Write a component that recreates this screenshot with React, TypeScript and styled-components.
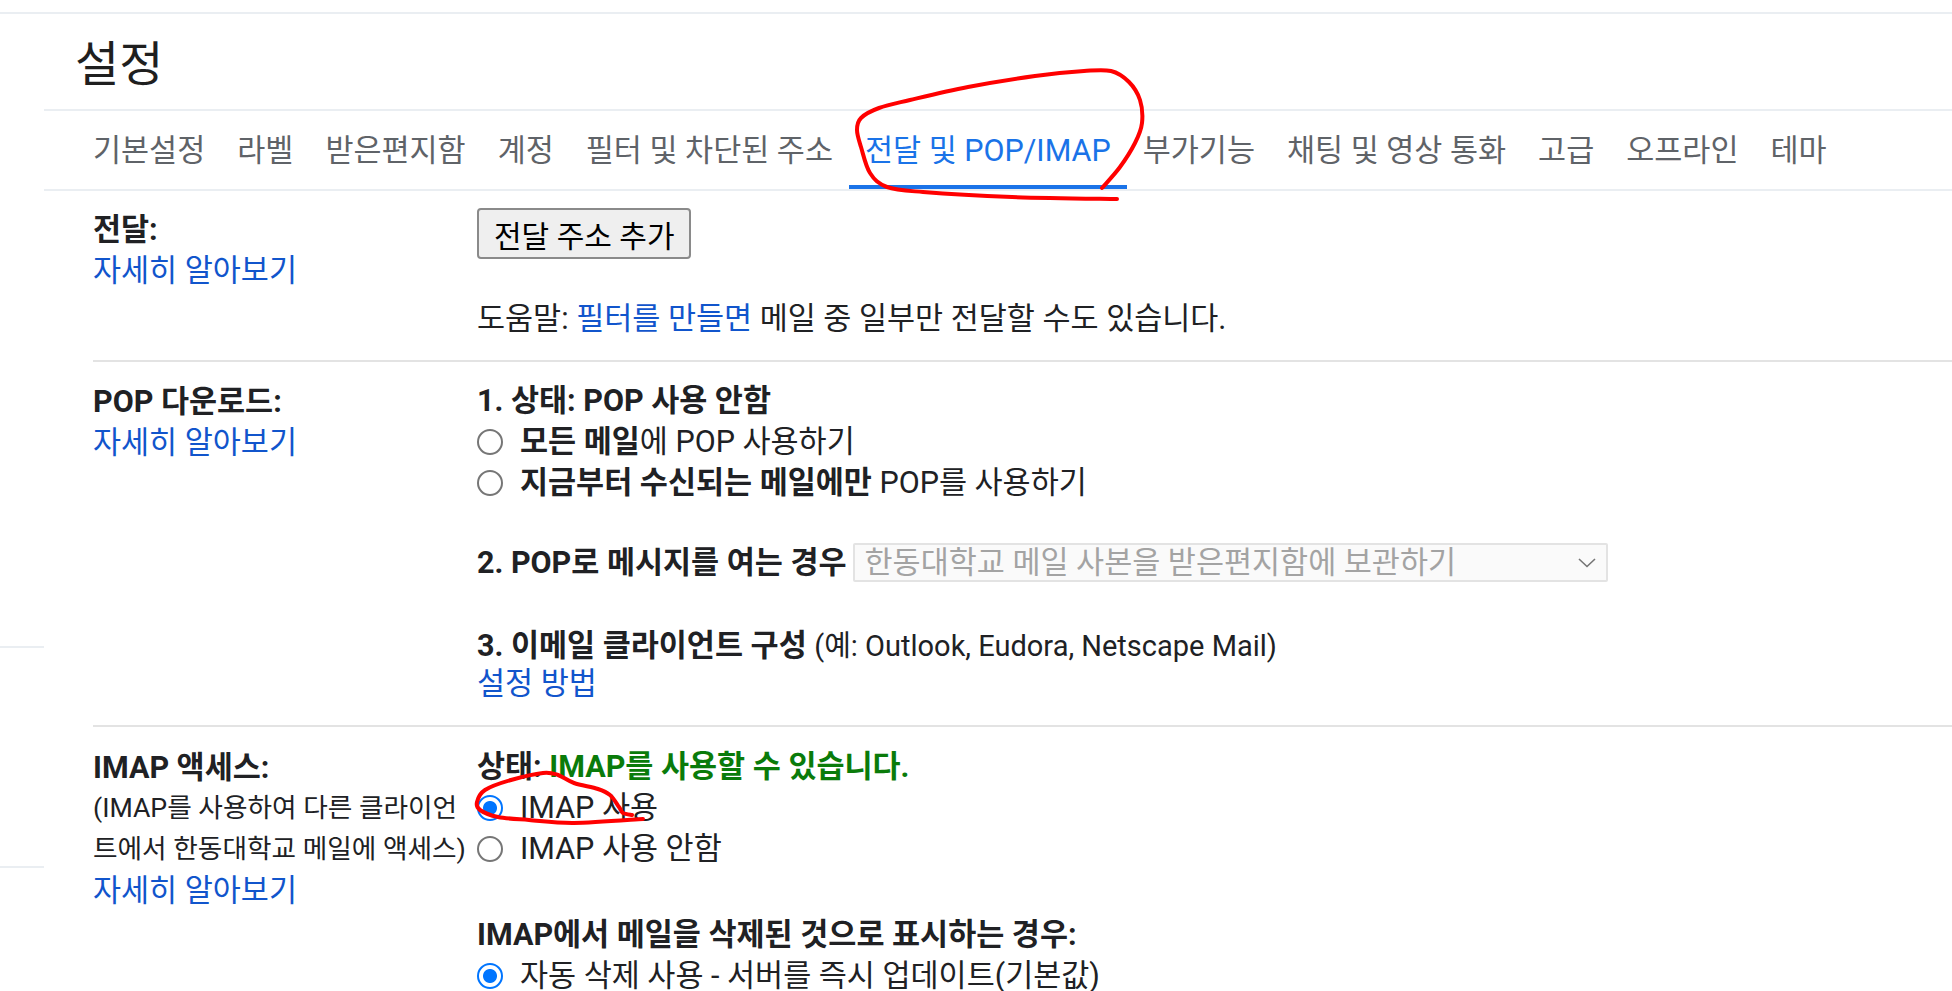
import React from "react";
import styled, { createGlobalStyle } from "styled-components";

const GlobalStyle = createGlobalStyle`
  html, body { margin: 0; padding: 0; background: #ffffff; }
  body {
    font-family: Roboto, "Noto Sans CJK KR", "Noto Sans", sans-serif;
    color: #202124;
    overflow: hidden;
  }
  * { box-sizing: border-box; }
`;

const Page = styled.div`
  position: relative;
  width: 1952px;
  height: 991px;
  overflow: hidden;
  padding-top: 12px;
`;

const TopRule = styled.div`
  height: 2px;
  background: #eaeef2;
`;

const Body = styled.div`
  display: flex;
`;

const Gutter = styled.div`
  width: 44px;
  flex: none;
  display: flex;
  flex-direction: column;
`;

const GutterRule = styled.div<{ $gap: number }>`
  margin-top: ${(p) => p.$gap}px;
  height: 2px;
  background: #eaeef2;
`;

const Panel = styled.main`
  flex: 1;
  min-width: 0;
`;

const Header = styled.header`
  height: 97px;
  display: flex;
  align-items: center;
  padding: 6px 0 0 31px;
  border-bottom: 2px solid #eaeef2;
`;

const Title = styled.h1`
  margin: 0;
  font-size: 48px;
  font-weight: 400;
  line-height: 1;
  color: #1f1f1f;
`;

const TabBar = styled.nav`
  display: flex;
  height: 80px;
  padding-left: 33px;
  border-bottom: 2px solid #eaeef2;
`;

const Tab = styled.div<{ $active?: boolean }>`
  display: flex;
  align-items: center;
  height: 78px;
  padding: 0 16px;
  font-size: 30.5px;
  white-space: nowrap;
  color: ${(p) => (p.$active ? "#1a73e8" : "#5f6368")};
  border-bottom: 4px solid ${(p) => (p.$active ? "#1a73e8" : "transparent")};
`;

const Sections = styled.div`
  margin-left: 49px;
`;

const Section = styled.section<{ $top: number; $bottom: number; $last?: boolean }>`
  display: grid;
  grid-template-columns: 384px 1fr;
  padding: ${(p) => p.$top}px 0 ${(p) => p.$bottom}px;
  border-bottom: ${(p) => (p.$last ? "none" : "2px solid #e3e3e3")};
  font-size: 30.5px;
  line-height: 41px;
`;

const LabelCol = styled.div`
  padding-top: 1px;
  display: flex;
  flex-direction: column;
`;

const Label = styled.div`
  font-weight: 700;
  color: #202124;
`;

const Link = styled.a`
  color: #1155cc;
  text-decoration: none;
  cursor: pointer;
`;

const Desc = styled.div`
  font-size: 26.7px;
  line-height: 41px;
  max-width: 382px;
  color: #202124;
`;

const ValueCol = styled.div`
  display: flex;
  flex-direction: column;
  align-items: flex-start;
`;

const Button = styled.button`
  height: 51px;
  padding: 0 15px;
  font-family: inherit;
  font-size: 30px;
  color: #000;
  background: #efefef;
  border: 2px solid #8a8a8a;
  border-radius: 4px;
`;

const Line = styled.div<{ $gap?: number; $lh?: number }>`
  margin-top: ${(p) => p.$gap ?? 0}px;
  line-height: ${(p) => p.$lh ?? 41}px;
  white-space: nowrap;
`;

const Strong = styled.span`
  font-weight: 700;
`;

const Note = styled.span`
  font-size: 29px;
`;

const Good = styled.span`
  font-weight: 700;
  color: #0a7b0a;
`;

const RadioRow = styled.label`
  display: flex;
  align-items: center;
  height: 41px;
  white-space: nowrap;
`;

const Radio = styled.input.attrs({ type: "radio" })`
  appearance: none;
  flex: none;
  width: 26px;
  height: 26px;
  margin: 0 17px 0 0;
  border-radius: 50%;
  border: 2px solid #767676;
  background: #fff;
  &:checked {
    border-color: #0075ff;
    background: radial-gradient(circle, #0075ff 0 6.5px, #ffffff 7.5px);
  }
`;

const SelectRow = styled.div`
  margin-top: 39px;
  display: flex;
  align-items: center;
  white-space: nowrap;
`;

const SelectBox = styled.div`
  margin-left: 6px;
  width: 755px;
  height: 39px;
  display: flex;
  align-items: center;
  justify-content: space-between;
  padding: 0 10px 0 10px;
  background: #fafafa;
  border: 2px solid #e3e3e3;
  border-radius: 2px;
  color: #a3a3a3;
  font-size: 30.5px;
`;

const Annotation = styled.svg`
  position: absolute;
  left: 0;
  top: 0;
  pointer-events: none;
`;

type Pt = [number, number];

function smooth(pts: Pt[]): string {
  let d = `M${pts[0][0]},${pts[0][1]}`;
  for (let i = 0; i < pts.length - 1; i++) {
    const p0 = pts[i - 1] || pts[i];
    const p1 = pts[i];
    const p2 = pts[i + 1];
    const p3 = pts[i + 2] || p2;
    const c1x = p1[0] + (p2[0] - p0[0]) / 6;
    const c1y = p1[1] + (p2[1] - p0[1]) / 6;
    const c2x = p2[0] - (p3[0] - p1[0]) / 6;
    const c2y = p2[1] - (p3[1] - p1[1]) / 6;
    d += ` C${c1x.toFixed(1)},${c1y.toFixed(1)} ${c2x.toFixed(1)},${c2y.toFixed(1)} ${p2[0]},${p2[1]}`;
  }
  return d;
}

const tabLoop: Pt[] = [
  [1117, 199], [1012, 197], [923, 192], [887, 187], [870, 173], [861, 147],
  [857, 130], [861, 118], [879, 108], [910, 100], [968, 87], [1035, 76],
  [1084, 71], [1111, 71], [1129, 82], [1140, 100], [1142, 123], [1135, 143],
  [1120, 167], [1102, 188],
];

const radioLoop: Pt[] = [
  [643, 819], [574, 823], [529, 820], [498, 817], [480, 810], [477, 802],
  [485, 790], [511, 780], [543, 773], [558, 775], [574, 783], [598, 789],
  [610, 795], [619, 807], [623, 813], [632, 815],
];

const tabs = [
  "기본설정",
  "라벨",
  "받은편지함",
  "계정",
  "필터 및 차단된 주소",
  "전달 및 POP/IMAP",
  "부가기능",
  "채팅 및 영상 통화",
  "고급",
  "오프라인",
  "테마",
];

const Chevron = () => (
  <svg width="18" height="10" viewBox="0 0 18 10">
    <path d="M1 1 L9 8.5 L17 1" fill="none" stroke="#757575" strokeWidth="1.6" />
  </svg>
);

export default function App() {
  return (
    <>
      <GlobalStyle />
      <Page>
        <TopRule />
        <Body>
          <Gutter>
            <GutterRule $gap={632} />
            <GutterRule $gap={218} />
          </Gutter>
          <Panel>
            <Header>
              <Title>설정</Title>
            </Header>
            <TabBar>
              {tabs.map((t) => (
                <Tab key={t} $active={t === "전달 및 POP/IMAP"}>
                  {t}
                </Tab>
              ))}
            </TabBar>
            <Sections>
              <Section $top={17} $bottom={21}>
                <LabelCol>
                  <Label>전달:</Label>
                  <Link>자세히 알아보기</Link>
                </LabelCol>
                <ValueCol>
                  <Button>전달 주소 추가</Button>
                  <Line $gap={39}>
                    도움말: <Link>필터를 만들면</Link> 메일 중 일부만 전달할 수도 있습니다.
                  </Line>
                </ValueCol>
              </Section>

              <Section $top={18} $bottom={22}>
                <LabelCol>
                  <Label>POP 다운로드:</Label>
                  <Link>자세히 알아보기</Link>
                </LabelCol>
                <ValueCol>
                  <Line>
                    <Strong>1. 상태: POP 사용 안함</Strong>
                  </Line>
                  <RadioRow>
                    <Radio name="pop" />
                    <span>
                      <Strong>모든 메일</Strong>에 POP 사용하기
                    </span>
                  </RadioRow>
                  <RadioRow>
                    <Radio name="pop" />
                    <span>
                      <Strong>지금부터 수신되는 메일에만</Strong> POP를 사용하기
                    </span>
                  </RadioRow>
                  <SelectRow>
                    <Strong>2. POP로 메시지를 여는 경우</Strong>
                    <SelectBox>
                      <span>한동대학교 메일 사본을 받은편지함에 보관하기</span>
                      <Chevron />
                    </SelectBox>
                  </SelectRow>
                  <Line $gap={44} $lh={38}>
                    <Strong>3. 이메일 클라이언트 구성</Strong>{" "}
                    <Note>(예: Outlook, Eudora, Netscape Mail)</Note>
                  </Line>
                  <Line $lh={38}>
                    <Link>설정 방법</Link>
                  </Line>
                </ValueCol>
              </Section>

              <Section $top={19} $bottom={0} $last>
                <LabelCol>
                  <Label>IMAP 액세스:</Label>
                  <Desc>(IMAP를 사용하여 다른 클라이언트에서 한동대학교 메일에 액세스)</Desc>
                  <Link>자세히 알아보기</Link>
                </LabelCol>
                <ValueCol>
                  <Line>
                    <Strong>상태: </Strong>
                    <Good>IMAP를 사용할 수 있습니다.</Good>
                  </Line>
                  <RadioRow>
                    <Radio name="imap" defaultChecked />
                    <span>IMAP 사용</span>
                  </RadioRow>
                  <RadioRow>
                    <Radio name="imap" />
                    <span>IMAP 사용 안함</span>
                  </RadioRow>
                  <Line $gap={45}>
                    <Strong>IMAP에서 메일을 삭제된 것으로 표시하는 경우:</Strong>
                  </Line>
                  <RadioRow>
                    <Radio name="del" defaultChecked />
                    <span>자동 삭제 사용 - 서버를 즉시 업데이트(기본값)</span>
                  </RadioRow>
                </ValueCol>
              </Section>
            </Sections>
          </Panel>
        </Body>
        <Annotation width="1952" height="991" viewBox="0 0 1952 991">
          <path d={smooth(tabLoop)} fill="none" stroke="#ff0000" strokeWidth="4" strokeLinecap="round" strokeLinejoin="round" />
          <path d={smooth(radioLoop)} fill="none" stroke="#ff0000" strokeWidth="4" strokeLinecap="round" strokeLinejoin="round" />
        </Annotation>
      </Page>
    </>
  );
}
